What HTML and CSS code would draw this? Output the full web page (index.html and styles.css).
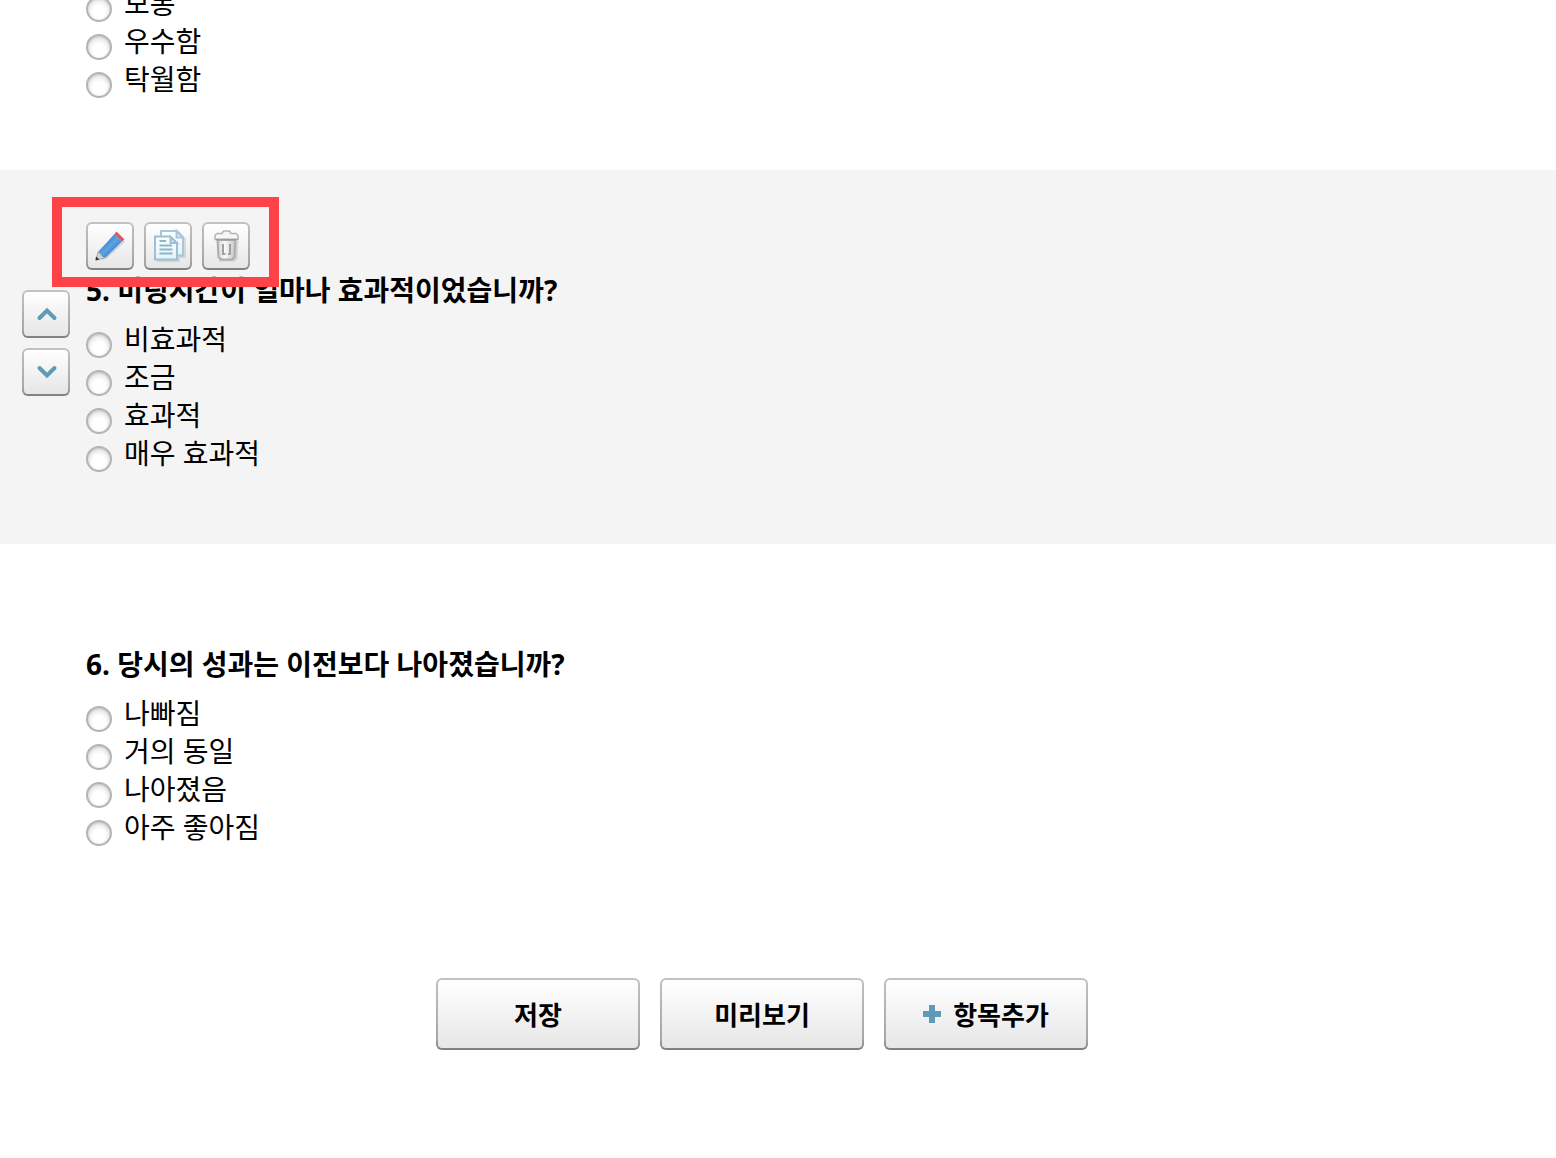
FILE: index.html
```html
<!DOCTYPE html>
<html lang="ko">
<head>
<meta charset="utf-8">
<title>설문</title>
<link rel="stylesheet" href="styles.css">
</head>
<body>
<form class="survey">
  <section class="question question-first">
    <div class="content">
      <label class="option"><input type="radio" name="q4"><span>보통</span></label>
      <label class="option"><input type="radio" name="q4"><span>우수함</span></label>
      <label class="option"><input type="radio" name="q4"><span>탁월함</span></label>
    </div>
  </section>

  <section class="question question-active">
    <div class="movers">
      <button type="button" class="btn btn-icon" aria-label="위로">
        <svg viewBox="0 0 48 48"><path class="chevron" d="M17.500 28L25 20.500L32.500 28"/></svg>
      </button>
      <button type="button" class="btn btn-icon" aria-label="아래로">
        <svg viewBox="0 0 48 48"><path class="chevron" d="M17.500 20L25 27.500L32.500 20"/></svg>
      </button>
    </div>
    <div class="content">
      <div class="toolbar">
        <button type="button" class="btn btn-icon" aria-label="편집">
          <svg viewBox="0 0 48 48">
            <defs>
              <linearGradient id="pencil" x1="0" y1="0" x2="1" y2="1">
                <stop offset="0.3" stop-color="#3f86cf"/>
                <stop offset="0.5" stop-color="#5ba3e2"/>
                <stop offset="0.75" stop-color="#3a7cc6"/>
              </linearGradient>
            </defs>
            <path d="M14 38L20 37L39 20L38 18L19 35Z" fill="#000" opacity="0.12"/>
            <path d="M12 30L10 38L18 36Z" fill="#d6d3d0" stroke="#a9a7a5"/>
            <path d="M10 34.500L9.500 38.500L13.500 37.500Z" fill="#333"/>
            <path d="M28.500 12L36 19.500L19 36L16 34L15 32L12 30Z" fill="url(#pencil)"/>
            <path d="M30.500 9.500L38.500 17.500L36 19.500L28.500 12Z" fill="#e2525c"/>
          </svg>
        </button>
        <button type="button" class="btn btn-icon" aria-label="복사">
          <svg viewBox="0 0 48 48">
            <defs>
              <linearGradient id="sheet" x1="0" y1="0" x2="0" y2="1">
                <stop offset="0" stop-color="#ffffff"/>
                <stop offset="1" stop-color="#dff3fa"/>
              </linearGradient>
            </defs>
            <path d="M13 39H35V35H41V16" fill="none" stroke="#000" stroke-opacity="0.1" stroke-width="2"/>
            <path d="M17 9H33L39 15.500V33.500H17Z" fill="url(#sheet)" stroke="#a8c7d8" stroke-width="2"/>
            <path d="M32.500 9V15.500H39Z" fill="#d6eaf3" stroke="#a8c7d8" stroke-width="2"/>
            <path d="M11 14.500H26L33 21V37.500H11Z" fill="url(#sheet)" stroke="#9bbfd3" stroke-width="2"/>
            <path d="M26.500 15V21H33Z" fill="#d0e4ee" stroke="#9bbfd3" stroke-width="2"/>
            <path d="M15.500 19H22M15.500 23.500H28M15.500 27.500H28.500M15.500 31.500H28.500" stroke="#8fb5cb" stroke-width="2"/>
          </svg>
        </button>
        <button type="button" class="btn btn-icon" aria-label="삭제">
          <svg viewBox="0 0 48 48">
            <defs>
              <linearGradient id="bin" x1="0" y1="0" x2="1" y2="0">
                <stop offset="0" stop-color="#d0d0d0"/>
                <stop offset="0.4" stop-color="#fafafa"/>
                <stop offset="1" stop-color="#c4c4c4"/>
              </linearGradient>
            </defs>
            <path d="M17 38.500H32L34.500 36L35.500 19" fill="none" stroke="#000" stroke-opacity="0.12" stroke-width="2"/>
            <path d="M15.500 18H33.500L32.500 35L30 37.500H19L16.500 35Z" fill="url(#bin)" stroke="#acacac" stroke-width="2"/>
            <path d="M13 17.500V13.500L15 11.500H20L21.500 9H27.500L29 11.500H34L36 13.500V17.500Z" fill="#f6f6f6" stroke="#b4b4b4" stroke-width="1.500"/>
            <path d="M14 17.500H35" stroke="#999" stroke-width="1.500"/>
            <path d="M21 22V32H23.500M28 22V32H26" fill="none" stroke="#a0a0a0" stroke-width="2"/>
          </svg>
        </button>
        <div class="highlight"></div>
      </div>
      <h2 class="title">5. 미팅시간이 얼마나 효과적이었습니까?</h2>
      <label class="option"><input type="radio" name="q5"><span>비효과적</span></label>
      <label class="option"><input type="radio" name="q5"><span>조금</span></label>
      <label class="option"><input type="radio" name="q5"><span>효과적</span></label>
      <label class="option"><input type="radio" name="q5"><span>매우 효과적</span></label>
    </div>
  </section>

  <section class="question">
    <div class="content">
      <h2 class="title">6. 당시의 성과는 이전보다 나아졌습니까?</h2>
      <label class="option"><input type="radio" name="q6"><span>나빠짐</span></label>
      <label class="option"><input type="radio" name="q6"><span>거의 동일</span></label>
      <label class="option"><input type="radio" name="q6"><span>나아졌음</span></label>
      <label class="option"><input type="radio" name="q6"><span>아주 좋아짐</span></label>
    </div>
  </section>

  <footer class="actions">
    <button type="button" class="btn btn-text">저장</button>
    <button type="button" class="btn btn-text">미리보기</button>
    <button type="button" class="btn btn-text">
      <svg class="plus" viewBox="0 0 18 18"><path d="M6 0H12V6H18V12H12V18H6V12H0V6H6Z" fill="#5f9ab8"/></svg>
      <span>항목추가</span>
    </button>
  </footer>
</form>
</body>
</html>
```
FILE: styles.css
```css
* {
  box-sizing: border-box;
}

body {
  margin: 0;
  background: #fff;
  color: #000;
  font-family: "Noto Sans", "Noto Sans CJK KR", sans-serif;
  font-size: 28px;
}

.survey {
  overflow: hidden;
}

.question {
  display: grid;
  grid-template-columns: 48px 1fr;
  column-gap: 16px;
  padding: 100px 22px 70px;
}

.content {
  grid-column: 2;
}

/* The list is scrolled, so the first question starts above the edge. */
.question-first {
  margin-top: -14px;
  padding-top: 0;
}

.question-active {
  padding-top: 52px;
  background: #f4f4f4;
}

.movers {
  display: flex;
  flex-direction: column;
  gap: 10px;
  padding-top: 68px;
}

.toolbar {
  position: relative;
  display: flex;
  gap: 10px;
  width: max-content;
}

.highlight {
  position: absolute;
  inset: -25px -29px -17px -34px;
  border: 10px solid #ff4248;
  pointer-events: none;
}

.title {
  margin: 0 0 12px;
  font-size: 28px;
  font-weight: 700;
  line-height: 40px;
}

.option {
  display: flex;
  align-items: flex-start;
  gap: 12px;
  height: 38px;
  line-height: 34px;
}

.option input {
  appearance: none;
  width: 26px;
  height: 26px;
  margin: 10px 0 0;
  border: 2px solid #b4b4b4;
  border-radius: 50%;
  background: radial-gradient(circle at 50% 62%, #fff 35%, #e4e4e4 75%);
  box-shadow: inset 0 1px 2px #c4c4c4;
}

.btn {
  display: flex;
  align-items: center;
  justify-content: center;
  padding: 0;
  border: 2px solid transparent;
  border-radius: 6px;
  background:
    linear-gradient(#fff, #e6e6e6) padding-box,
    linear-gradient(#c2c2c2, #a6a6a6 85%, #7c7c7c) border-box;
  color: #000;
  font: inherit;
}

.btn-icon {
  width: 48px;
  height: 48px;
}

.btn-icon svg {
  flex: none;
  width: 48px;
  height: 48px;
}

.chevron {
  fill: none;
  stroke: #5f9ab8;
  stroke-width: 4;
  stroke-linecap: round;
}

.actions {
  display: flex;
  justify-content: center;
  gap: 20px;
  padding: 60px 32px 108px 0;
}

.btn-text {
  gap: 12px;
  width: 204px;
  height: 72px;
  font-size: 26px;
  font-weight: 700;
}

.plus {
  width: 18px;
  height: 18px;
}
```
